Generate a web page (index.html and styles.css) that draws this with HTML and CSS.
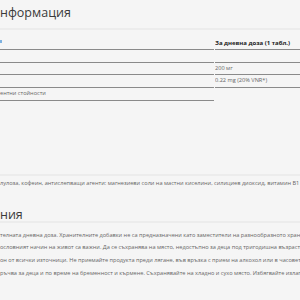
FILE: index.html
```html
<!DOCTYPE html>
<html lang="bg">
<head>
<meta charset="utf-8">
<link rel="stylesheet" href="styles.css">
</head>
<body>
<div class="page">
  <h2 class="title">нформация</h2>
  <div class="nutri">
    <div class="row head">
      <div class="cell left"><span class="link-tail"></span></div>
      <div class="cell right">За дневна доза (1 табл.)</div>
    </div>
    <div class="row">
      <div class="cell left"></div>
      <div class="cell right"></div>
    </div>
    <div class="row">
      <div class="cell left"></div>
      <div class="cell right">200 мг</div>
    </div>
    <div class="row">
      <div class="cell left"></div>
      <div class="cell right">0.22 mg (20% VNR*)</div>
    </div>
    <div class="row note">
      <div class="cell left">ентни стойности</div>
      <div class="cell right blank"></div>
    </div>
  </div>
  <div class="spacer"></div>
  <p class="ingredients">лулоза, кофеин, антислепващи агенти: магнезиеви соли на мастни киселини, силициев диоксид, витамин B1 (тиаминов хидрохлорид)</p>
  <h2 class="title second">ния</h2>
  <div class="warnings">
    <p class="line">телната дневна доза. Хранителните добавки не са предназначени като заместители на разнообразното хранене.</p>
    <p class="line">ословният начин на живот са важни. Да се съхранява на място, недостъпно за деца под тригодишна възраст. Не</p>
    <p class="line">он от всички източници. Не приемайте продукта преди лягане, във връзка с прием на алкохол или в часовете на</p>
    <p class="line">ръчва за деца и по време на бременност и кърмене. Съхранявайте на хладно и сухо място. Избягвайте излагане</p>
  </div>
</div>
</body>
</html>
```

FILE: styles.css
```css
html, body {
  margin: 0;
  padding: 0;
  background: #f5f5f5;
}
.page {
  width: 300px;
  height: 300px;
  overflow: hidden;
  font-family: "Open Sans", "Noto Sans", sans-serif;
  color: #555;
}
.title {
  margin: 0;
  height: 28px;
  line-height: 25px;
  font-size: 12.5px;
  font-weight: 400;
  color: #3a3a3a;
  white-space: nowrap;
  border-bottom: 2px solid #ececec;
}
.nutri {
  display: flex;
  flex-direction: column;
}
.row {
  display: grid;
  grid-template-columns: 214px 1fr;
  column-gap: 1px;
  height: 12.67px;
}
.row.head {
  height: 20px;
}
.cell {
  border-bottom: 1px solid #8a8a8a;
  font-size: 5.6px;
  line-height: 11.67px;
  white-space: nowrap;
  overflow: hidden;
  color: #666;
}
.head .cell {
  display: flex;
  align-items: flex-end;
  padding-bottom: 2px;
  line-height: 8px;
}
.head .right {
  font-weight: 700;
  color: #222;
  font-size: 6px;
}
.cell.blank {
  border-bottom: none;
}
.link-tail {
  display: block;
  width: 2px;
  height: 3px;
  background: #7fb2e0;
  margin-bottom: 4px;
}
.spacer {
  height: 73px;
  border-bottom: 2px solid #ececec;
}
.ingredients {
  margin: 0;
  font-size: 5.6px;
  line-height: 14px;
  white-space: nowrap;
  color: #666;
}
.title.second {
  margin-top: 14px;
  height: 17px;
  line-height: 21px;
  box-sizing: content-box;
}
.warnings {
  padding-top: 6px;
}
.line {
  margin: 0;
  font-size: 5.6px;
  line-height: 12.7px;
  white-space: nowrap;
  color: #666;
}
```
